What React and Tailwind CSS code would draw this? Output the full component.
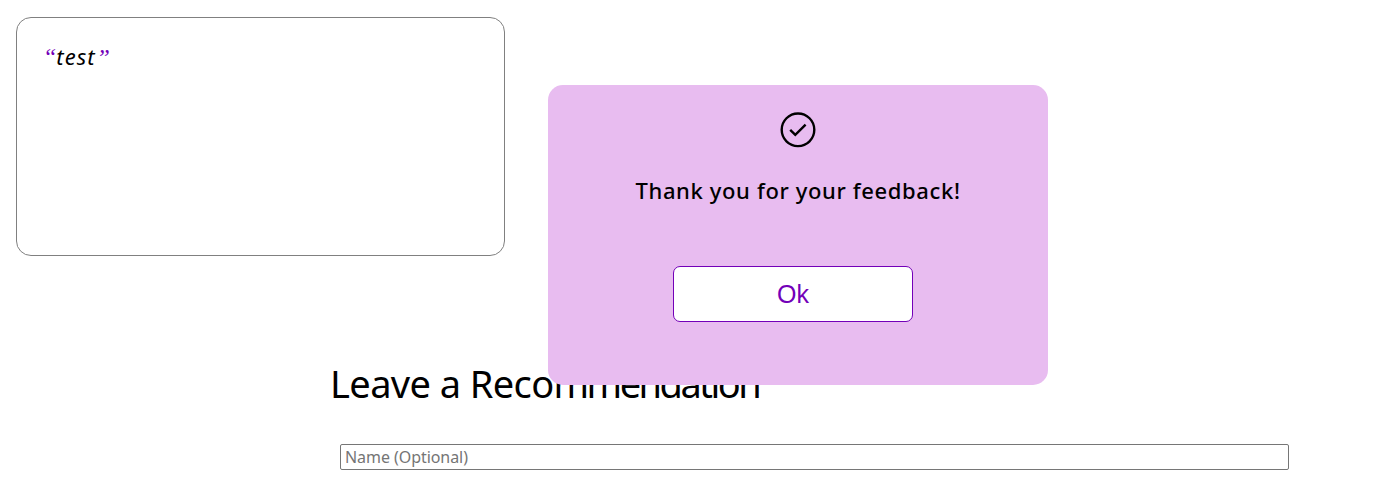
export default function App() {
  return (
    <main className="relative h-[487px] w-full overflow-hidden bg-white font-['Trebuchet_MS','Noto_Sans',sans-serif] text-black">
      <div className="px-4 pt-[17px]">
        <blockquote className="h-[239px] w-[489px] rounded-[15px] border border-[#808080] pl-[26px] pt-[22px] text-[22px] leading-8">
          <span className="font-['Liberation_Serif',serif] text-[24px] italic text-[#7300b8]">“</span>
          <em className="tracking-[1px]">test</em>
          <span className="ml-[1px] font-['Liberation_Serif',serif] text-[24px] italic text-[#7300b8]">”</span>
        </blockquote>
      </div>
      <section className="pl-[330px] pt-[99px]">
        <h2 className="h-[56px] whitespace-nowrap text-[38px] leading-[56px]">
          <span className="tracking-[-0.6px]">Leave a Reco</span>
          <span className="tracking-[-2.5px]">mmendation</span>
        </h2>
        <input
          placeholder="Name (Optional)"
          className="ml-[10px] mt-[33px] block h-[26px] w-[949px] rounded-[2px] border border-[#767676] px-1 text-[16px] leading-6 tracking-[-0.06px] placeholder:text-[#757575]"
        />
      </section>
      <div role="dialog" className="absolute left-[548px] top-[85px] flex h-[300px] w-[500px] flex-col items-center rounded-[15px] bg-[#e8bcf0] pt-[25px]">
        <svg width="40" height="40" viewBox="0 0 40 40" fill="none" stroke="black" strokeWidth="2.4">
          <circle cx="20" cy="19.8" r="16.3" />
          <path d="m12.2 19.9 5.1 5 10.3-10.3" />
        </svg>
        <p className="mt-[24px] whitespace-nowrap text-[22px] font-medium leading-8 tracking-[0.63px]">Thank you for your feedback!</p>
        <button className="mr-[10px] mt-[60px] h-[56px] w-[240px] rounded-[7px] border border-[#7300b8] bg-white pt-[2px] font-['Liberation_Sans',sans-serif] text-[25px] font-normal text-[#7300b8]">Ok</button>
      </div>
    </main>
  );
}
